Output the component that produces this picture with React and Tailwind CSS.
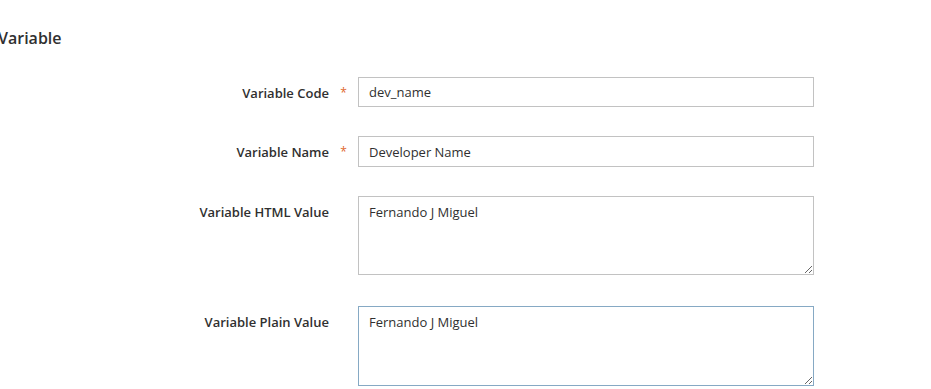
export default function App() {
  const font = { fontFamily: '"Open Sans", "Liberation Sans", sans-serif' };
  const Row = ({ label, required, children, className }) => (
    <div className={"flex items-start " + (className || "")}>
      <div className="w-[329px] text-right text-[13px] leading-[18px] font-semibold text-[#303030] pt-[7px]">
        {label}
      </div>
      <div className="w-[29px] flex justify-center pt-[7px] text-[12px] leading-[18px] text-[#e0662e]">
        {required ? "*" : ""}
      </div>
      {children}
    </div>
  );
  return (
    <div className="w-[931px] h-[389px] bg-white overflow-hidden text-[#303030]" style={font}>
      <div className="pt-[28px] -ml-[2px] text-[16px] leading-[20px] font-semibold text-[#303030]">
        Variable
      </div>
      <div className="mt-[29px] flex flex-col">
        <Row label="Variable Code" required>
          <input
            readOnly
            value="dev_name"
            className="w-[456px] h-[30px] border border-[#c2c2c2] bg-white px-[10px] text-[13px] text-[#303030] outline-none"
            style={font}
          />
        </Row>
        <Row label="Variable Name" required className="mt-[29px]">
          <input
            readOnly
            value="Developer Name"
            className="w-[456px] h-[31px] border border-[#c2c2c2] bg-white px-[10px] text-[13px] text-[#303030] outline-none"
            style={font}
          />
        </Row>
        <Row label="Variable HTML Value" className="mt-[29px]">
          <textarea
            readOnly
            defaultValue="Fernando J Miguel"
            className="w-[456px] h-[79px] border border-[#c2c2c2] bg-white px-[10px] py-[6px] text-[13px] leading-[18px] text-[#303030] outline-none"
            style={font}
          />
        </Row>
        <Row label="Variable Plain Value" className="mt-[31px]">
          <textarea
            readOnly
            defaultValue="Fernando J Miguel"
            className="w-[456px] h-[80px] border border-[#86a9c4] bg-white px-[10px] py-[6px] text-[13px] leading-[18px] text-[#303030] outline-none"
            style={font}
          />
        </Row>
      </div>
    </div>
  );
}
